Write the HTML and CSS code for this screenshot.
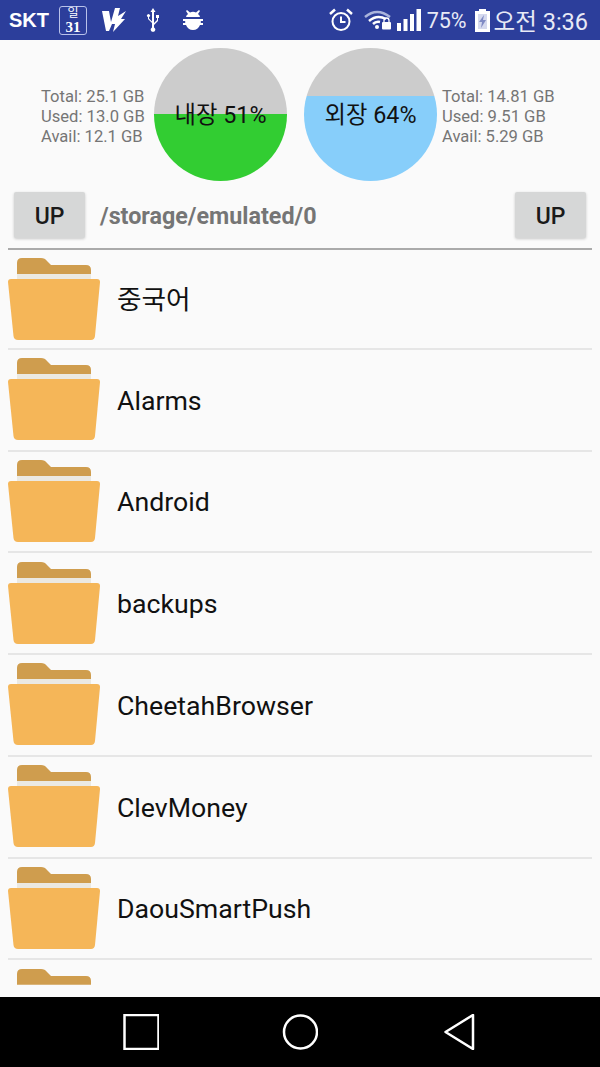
FILE: index.html
```html
<!DOCTYPE html>
<html lang="en">

<head>
    <meta charset="UTF-8">
    <meta name="viewport" content="width=device-width, initial-scale=1.0">
    <title>File Manager</title>
    <link rel="stylesheet" href="styles.css">
</head>

<body>
    <svg class="defs" width="0" height="0">
        <symbol id="folder" viewBox="0 0 92 82">
            <path d="M9 5Q9 0 14 0H33Q37 0 39 3L43 7H78Q83 7 83 12V20H9Z" fill="#cf9d4e" />
            <rect x="9" y="16" width="74" height="6" fill="#ebe9e2" />
            <path d="M3 21H89Q92 21 92 24L87 78Q86.500 82 83 82H10Q6 82 5.500 78L0 24Q0 21 3 21Z" fill="#f5b658" />
        </symbol>
    </svg>
    <div class="status">
        <div class="status-left">
            <span class="carrier">SKT</span>
            <span class="cal"><span class="cal-day">일</span><span class="cal-num">31</span></span>
            <svg class="ic" width="26" height="26" viewBox="0 0 26 26">
                <path d="M1 4H8L10 15L14 1H19L17 9L25 4L20 12H24L12 25L14 17H11L8 24H5Z" fill="#fff" />
            </svg>
            <svg class="ic usb" width="14" height="24" viewBox="0 0 14 24">
                <path d="M7 0L9.500 4H8V15L11 12V10H10V7H13V10H12V13L8 17V19.500A2.300 2.300 0 1 1 6 19.500V15L2 11V9A1.500 1.500 0 1 1 3 9V10.500L6 13.500V4H4.500Z" fill="#fff" />
            </svg>
            <svg class="ic bug" width="22" height="22" viewBox="0 0 22 22">
                <path d="M5 1L8 3.500Q11 2 14 3.500L17 1L18 2L16 5Q18 6.500 18 8H4Q4 6.500 6 5L4 2Z" fill="#fff" />
                <path d="M1 10H21V12H18.800V14H21V16H18Q16 21 11 21Q6 21 4 16H1V14H3.200V12H1Z" fill="#fff" />
            </svg>
        </div>
        <div class="status-right">
            <svg width="26" height="26" viewBox="0 0 26 26">
                <circle cx="13" cy="14.500" r="8.500" fill="none" stroke="#fff" stroke-width="2" />
                <path d="M13 9.500V15H17.500" fill="none" stroke="#fff" stroke-width="2" />
                <path d="M2 7L7 2.500M24 7L19 2.500" stroke="#fff" stroke-width="2.500" />
            </svg>
            <svg class="wifi" width="28" height="20" viewBox="0 0 28 20">
                <path d="M1 7Q13 -3 26 7" fill="none" stroke="#aab4dc" stroke-width="2.500" />
                <path d="M5 11Q13 4 22 9" fill="none" stroke="#fff" stroke-width="2.500" />
                <path d="M9 14Q12 11 16 12" fill="none" stroke="#fff" stroke-width="2.500" />
                <circle cx="13" cy="17" r="2" fill="#fff" />
                <rect x="18" y="12" width="9" height="7.500" rx="1" fill="#fff" />
                <path d="M20 12V10.500A2.500 2.500 0 0 1 25 10.500V12" fill="none" stroke="#fff" stroke-width="1.300" />
            </svg>
            <svg class="bars" width="25" height="24" viewBox="0 0 25 24">
                <rect x="0" y="15" width="4" height="8" fill="#fff" />
                <rect x="6.500" y="11" width="4" height="12" fill="#fff" />
                <rect x="13" y="6" width="4" height="17" fill="#fff" />
                <rect x="19.500" y="1" width="4.500" height="22" fill="#fff" />
            </svg>
            <span class="pct">75%</span>
            <svg class="batt" width="15" height="24" viewBox="0 0 15 24">
                <path d="M4 1H11V3H15V24H0V3H4Z" fill="#fff" />
                <path d="M3 6H12V21H3Z" fill="#d5d9ee" />
                <path d="M9 7L4 14H7L6 20L11 12H8Z" fill="#7f8ac4" />
            </svg>
            <span class="clock">오전 3:36</span>
        </div>
    </div>
    <div class="main">
        <div class="storage">
            <div class="stats stats-left">
                <div>Total: 25.1 GB</div>
                <div>Used: 13.0 GB</div>
                <div>Avail: 12.1 GB</div>
            </div>
            <div class="pie pie-inner">내장 51%</div>
            <div class="pie pie-outer">외장 64%</div>
            <div class="stats stats-right">
                <div>Total: 14.81 GB</div>
                <div>Used: 9.51 GB</div>
                <div>Avail: 5.29 GB</div>
            </div>
        </div>
        <div class="pathbar">
            <button type="button" class="up">UP</button>
            <div class="path">/storage/emulated/0</div>
            <button type="button" class="up">UP</button>
        </div>
        <ul class="files">
            <li><svg class="folder"><use href="#folder" /></svg><span>중국어</span></li>
            <li><svg class="folder"><use href="#folder" /></svg><span>Alarms</span></li>
            <li><svg class="folder"><use href="#folder" /></svg><span>Android</span></li>
            <li><svg class="folder"><use href="#folder" /></svg><span>backups</span></li>
            <li><svg class="folder"><use href="#folder" /></svg><span>CheetahBrowser</span></li>
            <li><svg class="folder"><use href="#folder" /></svg><span>ClevMoney</span></li>
            <li><svg class="folder"><use href="#folder" /></svg><span>DaouSmartPush</span></li>
            <li class="cut"><svg class="folder"><use href="#folder" /></svg></li>
        </ul>
    </div>
    <div class="nav">
        <svg width="36" height="36" viewBox="0 0 36 36">
            <rect x="1.500" y="1" width="34" height="34" fill="none" stroke="#fff" stroke-width="2.500" />
        </svg>
        <svg width="36" height="36" viewBox="0 0 36 36">
            <circle cx="18.500" cy="18" r="16.500" fill="none" stroke="#fff" stroke-width="2.500" />
        </svg>
        <svg width="36" height="36" viewBox="0 0 36 36">
            <path d="M32 1V35L4.500 18Z" fill="none" stroke="#fff" stroke-width="2.500" stroke-linejoin="round" />
        </svg>
    </div>
</body>

</html>
```
FILE: styles.css
```css
* {
    padding: 0;
    margin: 0;
    box-sizing: border-box;
}

html,
body {
    width: 100%;
    height: 100%;
    overflow: hidden;
}

body {
    display: flex;
    flex-direction: column;
    font-family: Roboto, "Noto Sans CJK KR", sans-serif;
    background-color: #fafafa;
}

.defs {
    display: none;
}

/* status bar */
.status {
    flex: 0 0 40px;
    display: flex;
    justify-content: space-between;
    align-items: center;
    background-color: #2c3e9b;
    color: #fff;
}

.status-left,
.status-right {
    display: flex;
    align-items: center;
}

.status-left {
    padding-left: 9px;
}

.status-right {
    padding-right: 12px;
}

.carrier {
    font-family: "Liberation Sans", sans-serif;
    font-size: 20px;
    font-weight: bold;
    width: 50px;
}

.cal {
    display: flex;
    flex-direction: column;
    align-items: center;
    width: 28px;
    height: 29px;
    border: 1px solid #b9c2ea;
    border-radius: 3px;
}

.cal-day {
    font-size: 12px;
    line-height: 13px;
    height: 13px;
}

.cal-num {
    font-family: "Liberation Serif", serif;
    font-size: 15px;
    line-height: 14px;
    font-weight: bold;
}

.ic {
    margin-left: 14px;
}

.usb {
    margin-left: 19px;
}

.bug {
    margin-left: 22px;
}

.wifi {
    margin-left: 10px;
}

.bars {
    margin-left: 5px;
}

.pct {
    font-size: 21.500px;
    margin-left: 5px;
    color: #e8eaf6;
}

.batt {
    margin-left: 8px;
}

.clock {
    font-size: 23.500px;
    margin-left: 4px;
    color: #e8eaf6;
}

/* storage pies */
.main {
    flex: 1;
    min-height: 0;
    overflow: hidden;
}

.storage {
    display: flex;
    align-items: center;
    height: 150px;
    padding-top: 8px;
    padding-bottom: 9px;
}

.stats {
    font-size: 16.600px;
    line-height: 20px;
    color: #757575;
    white-space: nowrap;
    padding-top: 4px;
}

.stats-left {
    width: 146px;
    padding-left: 41px;
    margin-right: 8px;
}

.stats-right {
    margin-left: 5px;
}

.pie {
    width: 133px;
    height: 133px;
    padding-bottom: 4px;
    border-radius: 50%;
    display: flex;
    align-items: center;
    justify-content: center;
    font-size: 23.300px;
    color: #111;
}

.pie-inner {
    background: linear-gradient(#cccccc 49.600%, #32cd32 49.600%);
}

.pie-outer {
    margin-left: 17px;
    background: linear-gradient(#cccccc 36%, #87cefa 36%);
}

/* path row */
.pathbar {
    display: flex;
    align-items: center;
    height: 60px;
    margin: 0 8px;
    padding: 2px 6px 11px;
    border-bottom: 2px solid #aaaaaa;
}

.up {
    flex: 0 0 71px;
    height: 46px;
    padding-top: 3px;
    border: none;
    border-radius: 2px;
    background-color: #d6d7d7;
    box-shadow: 0 1px 3px rgb(0 0 0 / 0.2);
    font-family: Roboto, sans-serif;
    font-size: 23px;
    font-weight: 500;
    color: #1a1a1a;
}

.path {
    flex: 1;
    padding-left: 15px;
    padding-top: 2px;
    font-size: 23.300px;
    font-weight: bold;
    color: #757575;
}

/* file list */
.files {
    list-style: none;
    margin: -2px 8px 0;
}

.files li {
    display: flex;
    align-items: center;
    height: 101.750px;
    padding-top: 4px;
    padding-bottom: 5px;
    border-bottom: 2px solid #e6e6e6;
    font-size: 26.700px;
    color: #111;
}

.files li:first-child {
    padding-top: 7px;
    padding-bottom: 4px;
}

.files li span {
    padding-top: 3px;
}

.files li:first-child span {
    padding-top: 0;
    padding-bottom: 4px;
}

.folder {
    flex: 0 0 92px;
    width: 92px;
    height: 82px;
    margin-right: 17px;
}

/* only the tab of the last folder shows above the nav bar */
.cut .folder {
    clip-path: inset(0 0 66px 0);
}

/* nav bar */
.nav {
    flex: 0 0 70px;
    display: flex;
    align-items: center;
    justify-content: space-between;
    padding: 0 123px;
    background-color: #000;
}
```
